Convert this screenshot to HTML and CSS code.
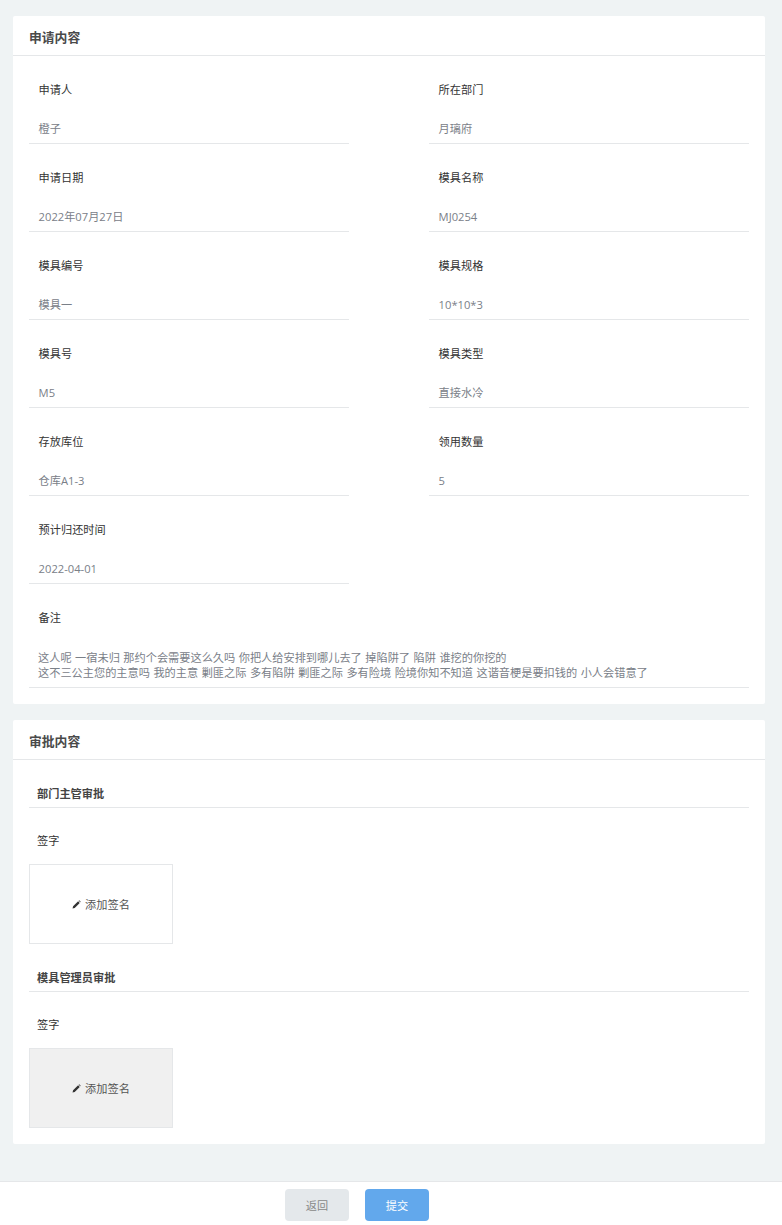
FILE: index.html
```html
<!DOCTYPE html>
<html lang="zh-CN">
<head>
  <meta charset="UTF-8">
  <meta name="viewport" content="width=device-width, initial-scale=1.0">
  <title>模具领用申请</title>
  <link rel="stylesheet" href="styles.css">
</head>
<body>

  <main class="content">
    <!-- Application details -->
    <section class="card">
      <h2 class="card-title">申请内容</h2>
      <div class="field-grid">
        <div class="field">
          <div class="field-label">申请人</div>
          <div class="field-value">橙子</div>
        </div>
        <div class="field">
          <div class="field-label">所在部门</div>
          <div class="field-value">月璃府</div>
        </div>
        <div class="field">
          <div class="field-label">申请日期</div>
          <div class="field-value">2022年07月27日</div>
        </div>
        <div class="field">
          <div class="field-label">模具名称</div>
          <div class="field-value">MJ0254</div>
        </div>
        <div class="field">
          <div class="field-label">模具编号</div>
          <div class="field-value">模具一</div>
        </div>
        <div class="field">
          <div class="field-label">模具规格</div>
          <div class="field-value">10*10*3</div>
        </div>
        <div class="field">
          <div class="field-label">模具号</div>
          <div class="field-value">M5</div>
        </div>
        <div class="field">
          <div class="field-label">模具类型</div>
          <div class="field-value">直接水冷</div>
        </div>
        <div class="field">
          <div class="field-label">存放库位</div>
          <div class="field-value">仓库A1-3</div>
        </div>
        <div class="field">
          <div class="field-label">领用数量</div>
          <div class="field-value">5</div>
        </div>
        <div class="field">
          <div class="field-label">预计归还时间</div>
          <div class="field-value">2022-04-01</div>
        </div>
        <div class="field field-wide">
          <div class="field-label">备注</div>
          <div class="field-value field-note">这人呢 一宿未归 那约个会需要这么久吗 你把人给安排到哪儿去了 掉陷阱了 陷阱 谁挖的你挖的<br>这不三公主您的主意吗 我的主意 剿匪之际 多有陷阱 剿匪之际 多有险境 险境你知不知道 这谐音梗是要扣钱的 小人会错意了</div>
        </div>
      </div>
    </section>

    <!-- Approval -->
    <section class="card">
      <h2 class="card-title">审批内容</h2>
      <div class="approval">
        <h3 class="approval-title">部门主管审批</h3>
        <div class="sign-label">签字</div>
        <div class="sign-box">
          <svg class="pen" viewBox="0 0 10 10"><path d="M0.6 9.4 L1.2 7 L6.8 1.4 L8.6 3.2 L3 8.8 Z M7.4 0.8 L8 0.3 L9.7 2 L9.2 2.6 Z"/></svg>
          添加签名
        </div>
        <h3 class="approval-title">模具管理员审批</h3>
        <div class="sign-label">签字</div>
        <div class="sign-box sign-box-disabled">
          <svg class="pen" viewBox="0 0 10 10"><path d="M0.6 9.4 L1.2 7 L6.8 1.4 L8.6 3.2 L3 8.8 Z M7.4 0.8 L8 0.3 L9.7 2 L9.2 2.6 Z"/></svg>
          添加签名
        </div>
      </div>
    </section>
  </main>

  <!-- Footer buttons -->
  <footer class="actions">
    <button class="btn btn-back">返回</button>
    <button class="btn btn-submit">提交</button>
  </footer>

</body>
</html>
```

FILE: styles.css
```css
* {
  margin: 0;
  padding: 0;
  box-sizing: border-box;
}

body {
  display: flex;
  flex-direction: column;
  min-height: 100vh;
  font-family: "Open Sans", "Noto Sans CJK SC", sans-serif;
  font-size: 11.2px;
  background-color: #eff3f4;
  color: #333;
}

.content {
  flex: 1;
  padding: 16px 17px 37px 13px;
}

.card {
  background-color: #fff;
  border-radius: 2px;
  margin-bottom: 16px;
}

.card:last-child {
  margin-bottom: 0;
}

.card-title {
  height: 40px;
  padding-left: 16px;
  border-bottom: 1px solid #e5e7e9;
  font-size: 12.8px;
  font-weight: 700;
  line-height: 43px;
  color: #4a4a4a;
}

/* Application fields */
.field-grid {
  display: grid;
  grid-template-columns: 320px 320px;
  column-gap: 80px;
  padding: 0 16px 16px;
}

.field-wide {
  grid-column: 1 / 3;
}

.field-label {
  padding: 17px 9.6px 0;
  line-height: 34px;
  color: #333;
}

.field-value {
  padding: 9px 9.6px 1px;
  line-height: 26px;
  border-bottom: 1px solid #e5e7e9;
  color: #7a8088;
}

.field-note {
  padding: 15px 9px 7px;
  line-height: 15px;
  word-spacing: 0.6px;
}

/* Approval sections */
.approval {
  padding: 0 16px 16px;
}

.approval-title {
  margin-top: 19px;
  padding: 2px 0 0 8px;
  font-size: 11.2px;
  font-weight: 700;
  line-height: 26px;
  border-bottom: 1px solid #e5e7e9;
  color: #444;
}

.sign-label {
  padding: 16px 8px 0;
  line-height: 34px;
}

.sign-box {
  display: flex;
  align-items: center;
  justify-content: center;
  gap: 4px;
  width: 144px;
  height: 80px;
  margin-top: 6px;
  border: 1px solid #e5e7e9;
  color: #555;
}

.sign-box-disabled {
  background-color: #f0f0f0;
}

.pen {
  width: 9px;
  height: 9px;
  fill: #333;
}

/* Footer buttons */
.actions {
  display: flex;
  justify-content: center;
  gap: 16px;
  height: 44px;
  padding: 7px 68px 0 0;
  background-color: #fff;
  border-top: 1px solid #e5e7e9;
}

.btn {
  width: 64px;
  height: 32px;
  border: none;
  border-radius: 4px;
  font-family: inherit;
  font-size: 11.2px;
}

.btn-back {
  background-color: #e4e8eb;
  color: #888;
}

.btn-submit {
  background-color: #62a8ec;
  color: #fff;
}
```
